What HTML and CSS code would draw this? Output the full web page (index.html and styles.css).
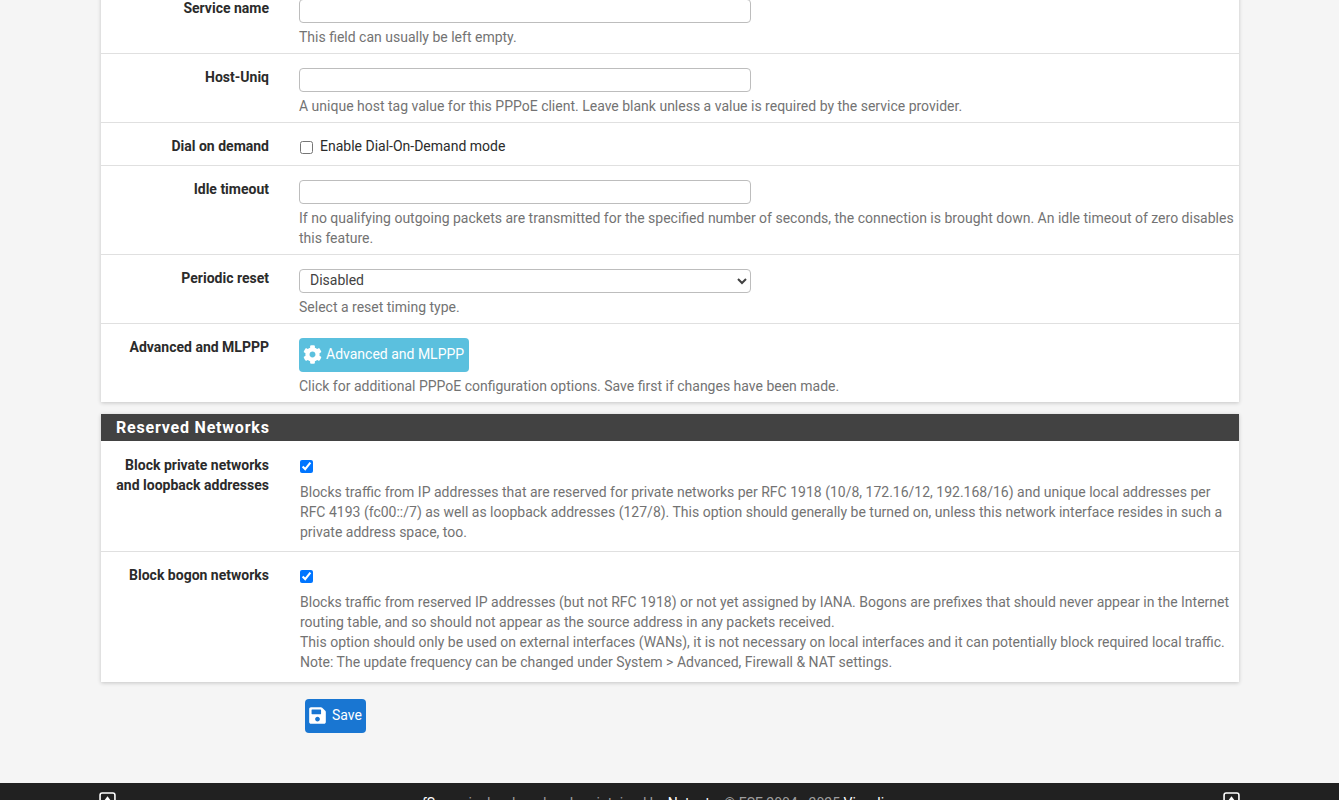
FILE: index.html
```html
<!DOCTYPE html>
<html lang="en">
<head>
<meta charset="utf-8">
<title>Interfaces: WAN</title>
<link rel="stylesheet" href="styles.css">
</head>
<body>
<main class="container">
  <section class="panel panel-first">
    <div class="row">
      <label class="row-label">Service name</label>
      <div class="row-body">
        <input class="field" type="text">
        <p class="help">This field can usually be left empty.</p>
      </div>
    </div>
    <div class="row">
      <label class="row-label">Host-Uniq</label>
      <div class="row-body">
        <input class="field" type="text">
        <p class="help">A unique host tag value for this PPPoE client. Leave blank unless a value is required by the service provider.</p>
      </div>
    </div>
    <div class="row row-check">
      <label class="row-label">Dial on demand</label>
      <div class="row-body">
        <label class="check"><input type="checkbox"> Enable Dial-On-Demand mode</label>
      </div>
    </div>
    <div class="row">
      <label class="row-label">Idle timeout</label>
      <div class="row-body">
        <input class="field" type="text">
        <p class="help">If no qualifying outgoing packets are transmitted for the specified number of seconds, the connection is brought down. An idle timeout of zero disables this feature.</p>
      </div>
    </div>
    <div class="row">
      <label class="row-label">Periodic reset</label>
      <div class="row-body">
        <select class="field select"><option>Disabled</option></select>
        <p class="help">Select a reset timing type.</p>
      </div>
    </div>
    <div class="row row-last">
      <label class="row-label">Advanced and MLPPP</label>
      <div class="row-body">
        <button class="btn btn-info" type="button">
          <svg class="icon" viewBox="0 0 512 512"><path d="M487.4 315.7l-42.6-24.6c4.3-23.2 4.3-47 0-70.2l42.6-24.6c4.9-2.8 7.1-8.6 5.5-14-11.1-35.6-30-67.8-54.7-94.6-3.8-4.1-10-5.1-14.8-2.3L380.8 110c-17.9-15.4-38.5-27.3-60.8-35.1V25.8c0-5.6-3.9-10.5-9.4-11.7-36.7-8.2-74.3-7.8-109.2 0-5.5 1.2-9.4 6.1-9.4 11.7V75c-22.2 7.9-42.8 19.8-60.8 35.1L88.7 85.5c-4.9-2.8-11-1.9-14.8 2.3-24.7 26.7-43.6 58.9-54.7 94.6-1.7 5.4.6 11.2 5.5 14L67.3 221c-4.3 23.2-4.3 47 0 70.2l-42.6 24.6c-4.9 2.8-7.1 8.6-5.5 14 11.1 35.6 30 67.8 54.7 94.6 3.8 4.1 10 5.1 14.8 2.3l42.6-24.6c17.9 15.4 38.5 27.3 60.8 35.1v49.2c0 5.6 3.9 10.5 9.4 11.7 36.7 8.2 74.3 7.8 109.2 0 5.5-1.2 9.4-6.1 9.4-11.7v-49.2c22.2-7.9 42.8-19.8 60.8-35.1l42.6 24.6c4.9 2.8 11 1.9 14.8-2.3 24.7-26.7 43.6-58.9 54.7-94.6 1.5-5.5-.7-11.3-5.6-14.1zM256 336c-44.1 0-80-35.9-80-80s35.9-80 80-80 80 35.9 80 80-35.9 80-80 80z"/></svg>
          Advanced and MLPPP
        </button>
        <p class="help">Click for additional PPPoE configuration options. Save first if changes have been made.</p>
      </div>
    </div>
  </section>

  <section class="panel">
    <h2 class="panel-title">Reserved Networks</h2>
    <div class="row row-private">
      <label class="row-label">Block private networks and loopback addresses</label>
      <div class="row-body">
        <label class="check check-only"><input type="checkbox" checked></label>
        <p class="help help-wide">Blocks traffic from IP addresses that are reserved for private networks per RFC 1918 (10/8, 172.16/12, 192.168/16) and unique local addresses per RFC 4193 (fc00::/7) as well as loopback addresses (127/8). This option should generally be turned on, unless this network interface resides in such a private address space, too.</p>
      </div>
    </div>
    <div class="row row-bogon">
      <label class="row-label">Block bogon networks</label>
      <div class="row-body">
        <label class="check check-only"><input type="checkbox" checked></label>
        <p class="help help-wide">Blocks traffic from reserved IP addresses (but not RFC 1918) or not yet assigned by IANA. Bogons are prefixes that should never appear in the Internet routing table, and so should not appear as the source address in any packets received.<br>This option should only be used on external interfaces (WANs), it is not necessary on local interfaces and it can potentially block required local traffic.<br>Note: The update frequency can be changed under System &gt; Advanced, Firewall &amp; NAT settings.</p>
      </div>
    </div>
  </section>

  <div class="actions">
    <button class="btn btn-primary" type="button">
      <svg class="icon icon-save" viewBox="0 0 448 512"><path d="M433.941 129.941l-83.882-83.882A48 48 0 0 0 316.118 32H48C21.49 32 0 53.49 0 80v352c0 26.51 21.49 48 48 48h352c26.51 0 48-21.49 48-48V163.882a48 48 0 0 0-14.059-33.941zM224 416c-35.346 0-64-28.654-64-64 0-35.346 28.654-64 64-64s64 28.654 64 64c0 35.346-28.654 64-64 64zm96-304.52V212c0 6.627-5.373 12-12 12H76c-6.627 0-12-5.373-12-12V108c0-6.627 5.373-12 12-12h228.52c3.183 0 6.235 1.264 8.485 3.515l3.48 3.48A11.996 11.996 0 0 1 320 111.48z"/></svg>
      Save
    </button>
  </div>
</main>
<footer class="footer">
  <div class="footer-inner">
    <svg class="top-icon" viewBox="0 0 16 16"><rect x="1" y="1" width="14" height="14" rx="2"/><path d="M8 4l3 4H5z"/></svg>
    <p class="footer-text"><a class="brand" href="#">pfSense</a> is developed and maintained by <a href="#">Netgate.</a> © ESF 2004 - 2025 <a href="#">View license.</a></p>
    <svg class="top-icon" viewBox="0 0 16 16"><rect x="1" y="1" width="14" height="14" rx="2"/><path d="M8 4l3 4H5z"/></svg>
  </div>
</footer>
</body>
</html>
```
FILE: styles.css
```css
* { box-sizing: border-box; }
html, body { height: 800px; margin: 0; overflow: hidden; }
body {
  background: #f5f5f5;
  font-family: Roboto, "Liberation Sans", sans-serif;
  font-size: 14px;
  line-height: 20px;
  color: #2b2b2b;
}
.container { display: flow-root; width: 1138px; margin: 0 0 0 101px; height: 783px; }
.panel {
  background: #fff;
  margin-bottom: 12px;
  box-shadow: 0 1px 4px rgba(0,0,0,.2);
}
.panel-first { margin-top: -15px; }
.panel-title {
  margin: 0;
  height: 27px;
  padding: 0 15px;
  background: #424242;
  color: #fff;
  font-size: 16px;
  line-height: 27px;
  font-weight: 700;
  letter-spacing: .8px;
}
.row {
  display: flex;
  padding: 14px 0 6px;
  border-bottom: 1px solid #e0e0e0;
}
.row-check { padding-bottom: 9px; }
.row-last { border-bottom: 0; padding-bottom: 6px; }
.row-private { padding-bottom: 9px; }
.row-bogon { border-bottom: 0; padding: 13px 0 10px; }
.row-label {
  flex: 0 0 168px;
  margin: -1px 30px 0 0;
  padding-left: 10px;
  text-align: right;
  font-weight: 700;
}
.row-private .row-label, .row-bogon .row-label { margin-top: 0; }
.row-body { flex: 1; min-width: 0; }
.field {
  display: block;
  width: 452px;
  height: 24px;
  padding: 0 6px;
  margin: 0;
  background: #fff;
  border: 1px solid #bdbdbd;
  border-radius: 4px;
  font: inherit;
  color: #424242;
}
.select { padding-bottom: 2px; }
.help { margin: 4px 0 0; color: #737373; }
.help-wide { margin: 5px 5px 0 1px; }
.check { display: flex; align-items: center; gap: 7px; height: 20px; padding-left: 1px; margin-top: -1px; }
.check input { margin: 2px 0 0; width: 13px; height: 13px; }
.check-only { height: 22px; margin-top: 0; }
.check-only input { margin: 0; }
.btn {
  display: inline-flex;
  align-items: center;
  gap: 4px;
  height: 34px;
  padding: 0 5px 2px 4px;
  border: 0;
  border-radius: 4px;
  color: #fff;
  font: inherit;
}
.icon { width: 19px; height: 19px; fill: currentColor; }
.icon-save { width: 17px; margin-right: 2px; }
.btn-info { background: #5bc0de; }
.btn-primary { background: #1976d2; padding-right: 4px; }
.actions { padding: 5px 0 0 204px; }
.footer { background: #212121; height: 60px; color: #9e9e9e; }
.footer-inner { display: flex; justify-content: space-between; padding: 9px 0 0 99px; width: 1240px; }
.footer-text { margin: 1px 0 0; line-height: 20px; }
.footer a { color: #fff; text-decoration: none; }
.top-icon { width: 17px; height: 17px; fill: none; stroke: #fff; stroke-width: 1.5; }
.top-icon path { fill: #fff; stroke: none; }
```
